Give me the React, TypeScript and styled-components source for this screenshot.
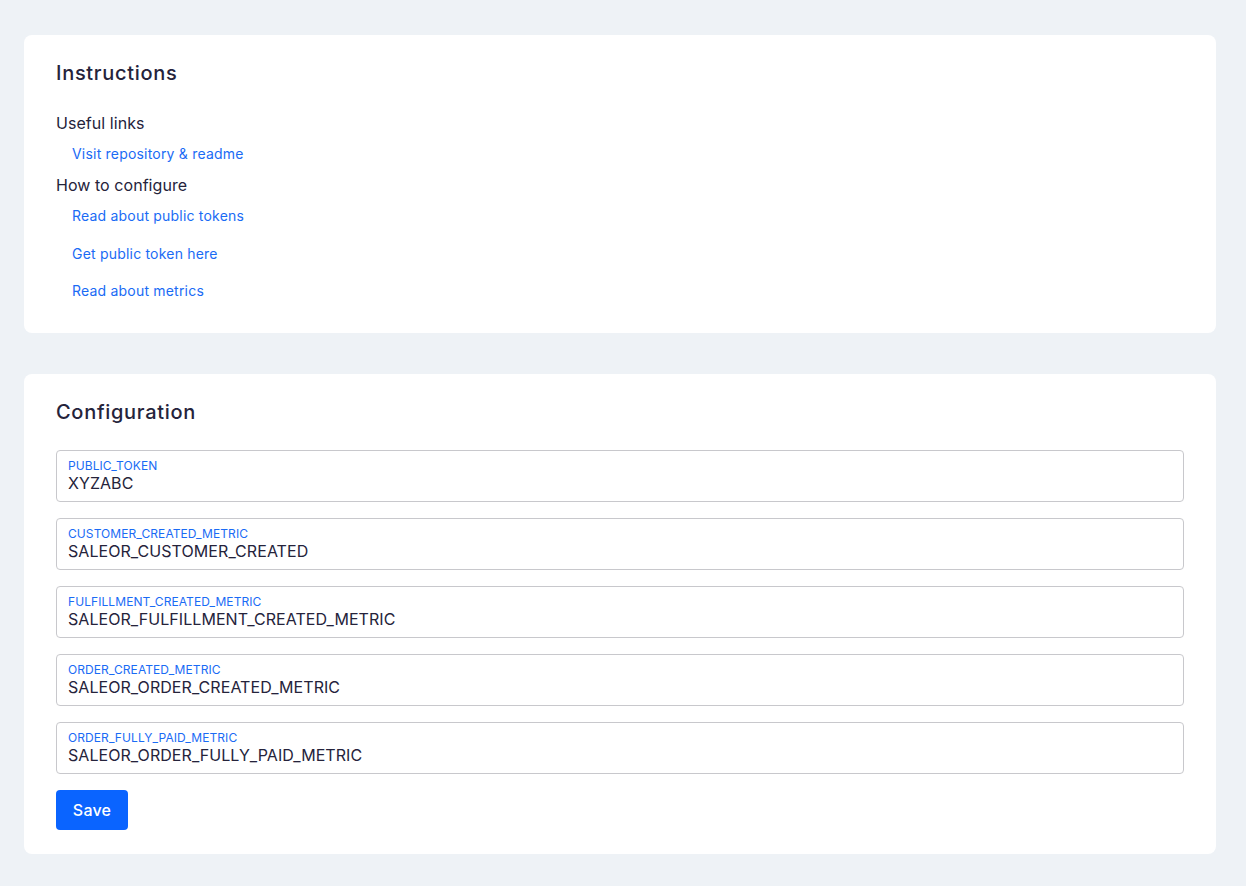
import React from "react";
import styled, { createGlobalStyle } from "styled-components";

const GlobalStyle = createGlobalStyle`
  html, body {
    margin: 0;
    padding: 0;
    background: #eef2f6;
    font-family: Inter, "Noto Sans", sans-serif;
    color: #25233b;
  }
  * { box-sizing: border-box; }
`;

const fields = [
  { name: "PUBLIC_TOKEN", value: "XYZABC" },
  { name: "CUSTOMER_CREATED_METRIC", value: "SALEOR_CUSTOMER_CREATED" },
  { name: "FULFILLMENT_CREATED_METRIC", value: "SALEOR_FULFILLMENT_CREATED_METRIC" },
  { name: "ORDER_CREATED_METRIC", value: "SALEOR_ORDER_CREATED_METRIC" },
  { name: "ORDER_FULLY_PAID_METRIC", value: "SALEOR_ORDER_FULLY_PAID_METRIC" },
];

function App() {
  return (
    <Page>
      <GlobalStyle />
      <Card className="instructions">
        <Title>Instructions</Title>
        <Subtitle $top={24}>Useful links</Subtitle>
        <LinkList>
          <A href="#">Visit repository &amp; readme</A>
        </LinkList>
        <Subtitle $top={9}>How to configure</Subtitle>
        <LinkList>
          <A href="#">Read about public tokens</A>
          <A href="#">Get public token here</A>
          <A href="#">Read about metrics</A>
        </LinkList>
      </Card>
      <Card className="configuration" $bottom={24}>
        <Title>Configuration</Title>
        <Form onSubmit={(e) => e.preventDefault()}>
          {fields.map((f) => (
            <Field key={f.name}>
              <Label>{f.name}</Label>
              <Input defaultValue={f.value} />
            </Field>
          ))}
          <SaveButton type="submit">Save</SaveButton>
        </Form>
      </Card>
    </Page>
  );
}

const Page = styled.div`
  padding: 35px 30px 32px 24px;
  display: flex;
  flex-direction: column;
  gap: 41px;
`;

const Card = styled.section<{ $bottom?: number }>`
  background: #ffffff;
  border-radius: 8px;
  padding: 24px 32px ${(p) => p.$bottom ?? 32}px;
  display: flex;
  flex-direction: column;
`;

const Title = styled.h2`
  margin: 0;
  font-size: 20px;
  line-height: 28px;
  font-weight: 500;
  letter-spacing: 0.7px;
  color: #25233b;
`;

const Subtitle = styled.h3<{ $top: number }>`
  margin: ${(p) => p.$top}px 0 0;
  font-size: 16px;
  line-height: 24px;
  font-weight: 400;
  letter-spacing: 0.05px;
  color: #25233b;
`;

const LinkList = styled.div`
  display: flex;
  flex-direction: column;
  gap: 17.5px;
  padding-left: 16px;
  margin-top: 9px;
`;

const A = styled.a`
  font-size: 14px;
  line-height: 20px;
  letter-spacing: 0.2px;
  color: #1a6bf5;
  text-decoration: none;
`;

const Form = styled.form`
  display: flex;
  flex-direction: column;
  align-items: flex-start;
  gap: 16px;
  margin-top: 24px;
`;

const Field = styled.label`
  width: 100%;
  height: 52px;
  border: 1px solid #c8c8cc;
  border-radius: 4px;
  padding: 8px 11px 0;
  display: flex;
  flex-direction: column;
`;

const Label = styled.span`
  font-size: 12px;
  line-height: 14px;
  letter-spacing: 0.08px;
  color: #1a6bf5;
`;

const Input = styled.input`
  border: none;
  outline: none;
  padding: 0;
  margin: 0;
  font-family: Inter, "Noto Sans", sans-serif;
  font-size: 16px;
  line-height: 20px;
  height: 20px;
  letter-spacing: 0.06px;
  color: #25233b;
  background: transparent;
`;

const SaveButton = styled.button`
  height: 40px;
  width: 72px;
  padding: 0;
  border: none;
  border-radius: 4px;
  background: #0a64ff;
  color: #ffffff;
  font-family: Inter, "Noto Sans", sans-serif;
  font-size: 16px;
  font-weight: 500;
  letter-spacing: 0.2px;
  cursor: pointer;
`;

export default App;
